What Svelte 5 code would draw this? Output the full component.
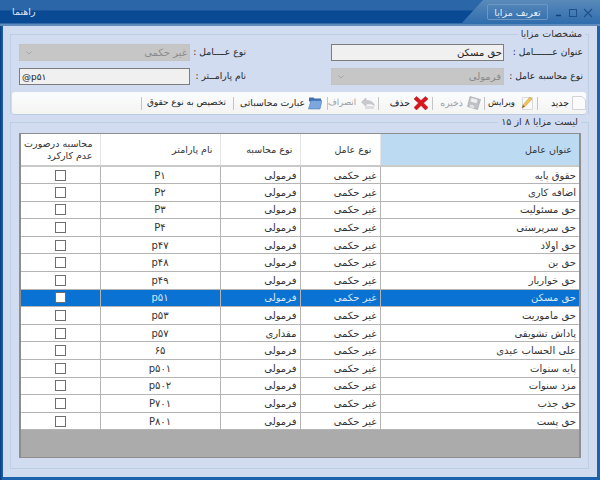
<script>
  const rows = [
    ["حقوق پایه", "غیر حکمی", "فرمولی", "P۱"],
    ["اضافه کاری", "غیر حکمی", "فرمولی", "P۲"],
    ["حق مسئولیت", "غیر حکمی", "فرمولی", "P۳"],
    ["حق سرپرستی", "غیر حکمی", "فرمولی", "P۴"],
    ["حق اولاد", "غیر حکمی", "فرمولی", "p۴۷"],
    ["حق بن", "غیر حکمی", "فرمولی", "p۴۸"],
    ["حق خواربار", "غیر حکمی", "فرمولی", "p۴۹"],
    ["حق مسکن", "غیر حکمی", "فرمولی", "p۵۱"],
    ["حق ماموریت", "غیر حکمی", "فرمولی", "p۵۳"],
    ["پاداش تشویقی", "غیر حکمی", "مقداری", "p۵۷"],
    ["علی الحساب عیدی", "غیر حکمی", "فرمولی", "۶۵"],
    ["پایه سنوات", "غیر حکمی", "فرمولی", "p۵۰۱"],
    ["مزد سنوات", "غیر حکمی", "فرمولی", "p۵۰۲"],
    ["حق جذب", "غیر حکمی", "فرمولی", "P۷۰۱"],
    ["حق پست", "غیر حکمی", "فرمولی", "P۸۰۱"]
  ];
  const selected = 7;
</script>

<div class="win" dir="rtl">
  <div class="titlebar">
    <div class="title-right">
      <div class="tab">تعریف مزایا</div>
      <svg class="winbtns" width="48" height="24" viewBox="0 0 48 24">
        <path d="M4 15.500h5" stroke="#123f78" stroke-width="1.500" />
        <rect x="17.500" y="9.500" width="7" height="7" fill="none" stroke="#1f4f8a" />
        <path d="M32 9l8 8M40 9l-8 8" stroke="#1f4f8a" stroke-width="1.200" fill="none" />
      </svg>
    </div>
    <div class="help">راهنما</div>
  </div>

  <div class="body">
    <fieldset class="specs">
      <legend>مشخصات مزایا</legend>
      <div class="form">
        <label class="lbl" for="f1">عنوان عـــــــامل :</label>
        <input id="f1" class="box" value="حق مسکن" readonly />
        <span class="lbl gap">نوع عــــامل :</span>
        <div class="box off">
          <span>غیر حکمی</span>
          <svg width="6" height="4" viewBox="0 0 6 4"><path d="M0.500 0.500L3 3l2.500-2.500" fill="none" stroke="#a4a4a4" /></svg>
        </div>
        <span class="lbl">نوع محاسبه عامل :</span>
        <div class="box off">
          <span>فرمولی</span>
          <svg width="6" height="4" viewBox="0 0 6 4"><path d="M0.500 0.500L3 3l2.500-2.500" fill="none" stroke="#a4a4a4" /></svg>
        </div>
        <label class="lbl gap" for="f2">نام پارامــتر :</label>
        <input id="f2" class="box" value="@p۵۱" readonly />
      </div>

      <div class="toolbar">
        <button class="tool t1">
          <svg class="ic" viewBox="0 0 14 14"><path d="M0.500 0.500h9.500l3.500 3.500v9.500h-13z" fill="#fbfbfb" stroke="#d0d3d9" /></svg>
          جدید
        </button>
        <i class="sep"></i>
        <button class="tool t2">
          <svg class="ic" viewBox="0 0 14 14">
            <path d="M3.500 1.500h10v12h-10z" fill="#fafafa" stroke="#d8dade" />
            <path d="M3 12l1-3 7-8 2 2-7 7.500z" fill="#f2c45a" stroke="#c79a35" stroke-width="0.600" />
            <path d="M3 12l1-3 2 1.500z" fill="#7a6a50" />
          </svg>
          ویرایش
        </button>
        <i class="sep"></i>
        <button class="tool t3 dim">
          <svg class="ic" viewBox="0 0 14 14">
            <path d="M3 0.500l10.500 3-3 10-10-3z" fill="#bfc1c5" stroke="#a3a5aa" stroke-width="0.600" />
            <path d="M4.500 2l6 1.700-1 3.500-6-1.700z" fill="#eef0f1" />
            <path d="M3.500 8.500l4 1.200-0.800 2.500-4-1.200z" fill="#e2e3e5" />
          </svg>
          ذخیره
        </button>
        <i class="sep"></i>
        <button class="tool t4">
          <svg class="ic" viewBox="0 0 14 14">
            <path d="M2.500 0.500l4.500 4 4.500-4 2.500 2.500-4.500 4 4.500 4.500-2.500 2.500-4.500-4.500-4.500 4.500-2.500-2.500 4.500-4.500-4.500-4z" fill="#dc141e" stroke="#a01218" stroke-width="0.500" />
          </svg>
          حذف
        </button>
        <i class="sep"></i>
        <button class="tool t5 dim">
          <svg class="ic" viewBox="0 0 14 14">
            <path d="M0.500 6l4.500-4v2.500c4 0 7 1 8.500 5-2-1.500-4-2-8.500-1.500v2.500z" fill="#c8cacd" stroke="#aeb0b4" stroke-width="0.500" />
            <path d="M4 10h9v3H4z" fill="#dcdde0" />
          </svg>
          انصراف
        </button>
        <i class="sep"></i>
        <button class="tool t6">
          <svg class="ic" viewBox="0 0 14 14">
            <path d="M1 1.500h4.500l1 1H13v3H1z" fill="#3f6fb4" />
            <path d="M3 4.500h11l-2 8.500H0.500z" fill="#7ca6de" stroke="#3e6cae" stroke-width="0.500" />
          </svg>
          عبارت محاسباتی
        </button>
        <i class="sep"></i>
        <button class="tool t7">تخصیص به نوع حقوق</button>
        <i class="sep"></i>
      </div>
    </fieldset>

    <fieldset class="list">
      <legend>لیست مزایا ۸ از ۱۵</legend>
      <div class="grid">
        <table>
          <thead>
            <tr>
              <th class="c1">عنوان عامل</th>
              <th class="c2">نوع عامل</th>
              <th class="c3">نوع محاسبه</th>
              <th class="c4">نام پارامتر</th>
              <th class="c5">محاسبه درصورت<br />عدم کارکرد</th>
            </tr>
          </thead>
          <tbody>
            {#each rows as r, i}
              <tr class:sel={i === selected}>
                <td>{r[0]}</td>
                <td>{r[1]}</td>
                <td>{r[2]}</td>
                <td class="param">{r[3]}</td>
                <td class="chk"><span class="cb"></span></td>
              </tr>
            {/each}
          </tbody>
        </table>
      </div>
    </fieldset>
  </div>
</div>

<style>
  :global(body) { margin: 0; background: #0b4f9a; }
  .win {
    width: 600px;
    height: 480px;
    box-sizing: border-box;
    display: flex;
    flex-direction: column;
    font: 9.5px "DejaVu Sans", sans-serif;
    color: #2a2a2a;
    background: linear-gradient(to right, #0a3f83, #1c62ac 3px);
    padding: 0 3px 3px;
    overflow: hidden;
  }
  .titlebar {
    height: 26px;
    margin: 0 -3px;
    flex: none;
    display: flex;
    justify-content: space-between;
    background: linear-gradient(to bottom, #2a66a8 0, #2a66a8 10px, #0a4a94 11px, #0a4a94 23px, #5f8bbd 24px, #5f8bbd 26px);
  }
  .title-right {
    width: 139px;
    height: 24px;
    flex: none;
    display: flex;
    direction: ltr;
    padding-left: 26px;
    box-sizing: border-box;
    clip-path: polygon(22px 0, 100% 0, 100% 100%, 0 100%);
    background: linear-gradient(to bottom, #5a8aba, #2f6dae);
  }
  .winbtns { margin-left: 4px; flex: none; }
  .tab {
    width: 61px;
    height: 16px;
    margin-top: 4px;
    line-height: 15px;
    text-align: center;
    color: #e6edf6;
    border: 1px solid #6f97c3;
    border-radius: 2px;
    box-sizing: border-box;
    direction: rtl;
  }
  .help {
    color: #dfe8f4;
    padding: 6px 0 0;
    margin-left: 12px;
  }
  .body {
    flex: 1;
    min-height: 0;
    background: #d2dcf0;
    padding: 2px 8px 0 7px;
    display: flex;
    flex-direction: column;
  }
  fieldset {
    margin: 0;
    padding: 0;
    border: 1px solid #bdcfe3;
    min-width: 0;
  }
  legend {
    padding: 0 3px;
    margin-right: 1px;
    font-size: 9.5px;
    line-height: 12px;
    color: #333;
  }
  .specs { border-bottom: 0; padding: 0 2px 0 1px; }
  .form {
    display: grid;
    grid-template-columns: 79px 173px 141px 171px;
    grid-template-rows: 17px 17px;
    row-gap: 7px;
    padding: 4px 3px 0 0;
    align-items: center;
  }
  .lbl { font-size: 9.2px; white-space: nowrap; color: #222; text-rendering: geometricPrecision; }
  .lbl.gap { padding-right: 85px; }
  .box {
    height: 17px;
    width: 100%;
    box-sizing: border-box;
    margin: 0;
    padding: 0 1px;
    font: 10px "DejaVu Sans", sans-serif;
    color: #222;
    outline: 0;
    border: 1px solid #7d7d7d;
    background: #f0f0f0;
  }
  .box.off {
    display: flex;
    justify-content: space-between;
    align-items: center;
    border: 1px solid #c3c3c3;
    background: #c6c6c6;
    color: #8a8a8a;
    padding: 0 2px 0 6px;
  }
  #f2 { direction: ltr; text-align: left; padding-left: 2px; font-size: 9px; }
  .toolbar {
    margin: 7px 0 0;
    height: 22px;
    display: flex;
    align-items: center;
    background: linear-gradient(to bottom, #fbfcfe, #f4f4f3);
    border-radius: 3px;
    box-shadow: 0 1px 0 #bdcbe0;
  }
  .tool {
    display: flex;
    align-items: center;
    flex: none;
    gap: 4px;
    height: 22px;
    border: 0;
    padding: 0;
    box-sizing: border-box;
    background: none;
    font: 9.3px "DejaVu Sans", sans-serif;
    text-rendering: geometricPrecision;
    color: #222;
    white-space: nowrap;
  }
  .tool.dim { color: #9a9da3; }
  .t1 { width: 48px; gap: 3px; }
  .t2 { width: 52px; padding-right: 4px; gap: 4px; font-size: 8.6px; }
  .t3 { width: 51px; padding-right: 3px; }
  .t4 { width: 53px; padding-right: 4px; }
  .t5 { width: 50px; padding-right: 3px; gap: 5px; font-size: 8.5px; }
  .t6 { width: 93px; padding-right: 5px; gap: 3px; }
  .t7 { width: 91px; padding-right: 7px; font-size: 8.9px; }
  .ic { width: 14px; height: 14px; flex: none; }
  .sep {
    width: 1px;
    height: 13px;
    background: #c4c4c4;
    flex: none;
  }
  .list {
    flex: 1;
    min-height: 0;
    margin-top: 2px;
    margin-bottom: 8px;
    padding: 0 7px 0 8px;
  }
  .list legend { margin-right: 0; }
  .grid {
    height: 325px;
    margin-top: 5px;
    border: 1px solid #8e8e8e;
    border-left-width: 2px;
    border-right-width: 2px;
    background: #ababab;
    overflow: hidden;
    box-sizing: border-box;
  }
  table {
    width: 558px;
    border-collapse: collapse;
    table-layout: fixed;
    font-size: 10px;
  }
  th {
    height: 32px;
    padding: 0 7px 0 0;
    background: #fff;
    font-size: 9.5px;
    font-weight: 400;
    text-align: right;
    color: #333;
    border-right: 1px solid #e4e4e4;
    border-bottom: 2px solid #c9c9c9;
    line-height: 12px;
    box-sizing: border-box;
  }
  th:first-child { border-right: 0; }
  th.c1 { width: 199px; background: #bcdbf2; }
  th.c2 { width: 80px; padding-right: 8px; }
  th.c3 { width: 80px; }
  th.c4 { width: 120px; }
  th.c5 { width: 79px; }
  td {
    height: 17.6px;
    padding: 0 3px 0 0;
    box-sizing: border-box;
    background: #fff;
    color: #333;
    text-align: right;
    border-bottom: 1px solid #b4b4b4;
    border-right: 1px solid #b4b4b4;
    overflow: hidden;
    white-space: nowrap;
  }
  td:first-child { border-right: 0; }
  td.param { text-align: center; direction: ltr; padding: 0; }
  td.chk { text-align: center; padding: 0; line-height: 0; }
  .cb {
    display: inline-block;
    width: 9px;
    height: 9px;
    border: 1px solid #6e6e6e;
    background: #fff;
    vertical-align: middle;
  }
  tr.sel td { background: #0a72d2; color: #d9e9f8; }
</style>
